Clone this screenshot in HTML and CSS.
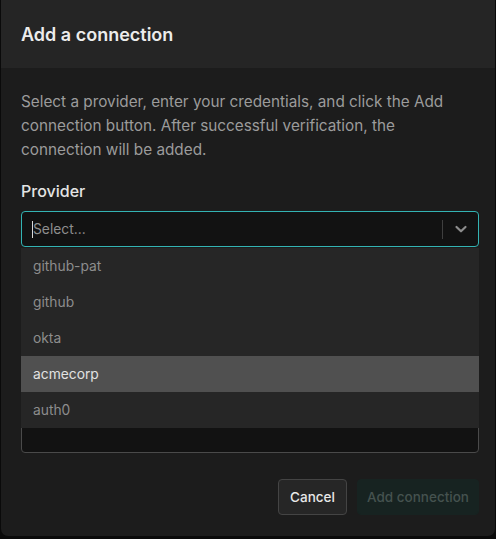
FILE: index.html
```html
<!DOCTYPE html>
<html>
<head>
<meta charset="utf-8">
<link rel="stylesheet" href="styles.css">
</head>
<body>
<div class="modal">
  <div class="header"><h2 class="title">Add a connection</h2></div>
  <div class="body">
    <p class="desc">Select a provider, enter your credentials, and click the Add connection button. After successful verification, the connection will be added.</p>
    <div class="field">
      <div class="label">Provider</div>
      <div class="select-wrap">
        <div class="select">
          <div class="value"><span class="caret"></span><span class="placeholder">Select...</span></div>
          <span class="sep"></span>
          <span class="chev"><svg width="14" height="14" viewBox="0 0 14 14"><path d="M2.5 5 L7 9.3 L11.5 5" fill="none" stroke="#8d8d8d" stroke-width="2.2" stroke-linecap="round" stroke-linejoin="round"/></svg></span>
        </div>
        <ul class="menu">
          <li class="opt">github-pat</li>
          <li class="opt">github</li>
          <li class="opt">okta</li>
          <li class="opt active">acmecorp</li>
          <li class="opt">auth0</li>
        </ul>
      </div>
    </div>
    <div class="field second">
      <div class="label hidden-label">Credentials</div>
      <div class="box"></div>
    </div>
    <div class="footer">
      <button class="btn cancel">Cancel</button>
      <button class="btn primary" disabled>Add connection</button>
    </div>
  </div>
</div>
</body>
</html>
```
FILE: styles.css
```css
* { box-sizing: border-box; }
html, body { margin: 0; padding: 0; }
body {
  background: #0a0a0a;
  font-family: Inter, "Noto Sans", sans-serif;
  width: 496px;
  height: 539px;
  overflow: hidden;
}
.modal {
  margin-left: 1px;
  width: 494px;
  height: 536px;
  background: #1c1c1c;
  border-radius: 0 0 7px 7px;
  overflow: hidden;
}
.header {
  height: 68px;
  background: #252525;
  display: flex;
  align-items: center;
  padding: 0 20px;
}
.title {
  margin: 0;
  font-size: 18px;
  font-weight: 600;
  color: #ececec;
}
.body {
  padding: 22px 16px 19px 20px;
}
.desc {
  margin: 0;
  font-size: 15.3px;
  line-height: 24px;
  color: #9b9b9b;
}
.field { margin-top: 17px; }
.label {
  font-size: 16px;
  line-height: 24px;
  font-weight: 500;
  color: #e4e4e4;
}
.hidden-label { visibility: hidden; }
.select-wrap { position: relative; margin-top: 8px; }
.select {
  height: 36px;
  border: 1px solid #33b3b3;
  border-radius: 4px;
  background: #121212;
  display: flex;
  align-items: center;
}
.value {
  flex: 1;
  display: flex;
  align-items: center;
  padding-left: 10px;
}
.caret {
  width: 1px;
  height: 17px;
  background: #d8d8d8;
}
.placeholder {
  font-size: 13.8px;
  color: #8e8e8e;
}
.sep {
  width: 1px;
  height: 19px;
  background: #3f3f3f;
}
.chev {
  width: 35px;
  display: flex;
  justify-content: center;
  align-items: center;
}
.menu {
  position: absolute;
  left: 0;
  right: 0;
  top: 37px;
  margin: 0;
  padding: 0;
  list-style: none;
  background: #262626;
  z-index: 2;
}
.opt {
  height: 36px;
  display: flex;
  align-items: center;
  padding-left: 12px;
  font-size: 13.8px;
  color: #8d8d8d;
}
.opt.active {
  background: #505050;
  color: #e2e2e2;
}
.second { margin-top: 16px; }
.second .box {
  margin-top: 8px;
  height: 158px;
  border: 1px solid #4a4a4a;
  border-radius: 4px;
  background: #121212;
}
.footer {
  margin-top: 26px;
  display: flex;
  justify-content: flex-end;
  gap: 10px;
}
.btn {
  height: 36px;
  border-radius: 4px;
  font-family: Inter, "Noto Sans", sans-serif;
  font-size: 13.5px;
  font-weight: 500;
  padding: 0;
  white-space: nowrap;
}
.cancel {
  width: 69px;
  background: #262626;
  border: 1px solid #444;
  color: #e8e8e8;
}
.primary {
  width: 122px;
  background: #172321;
  border: 1px solid #172321;
  color: #45524f;
}
```
